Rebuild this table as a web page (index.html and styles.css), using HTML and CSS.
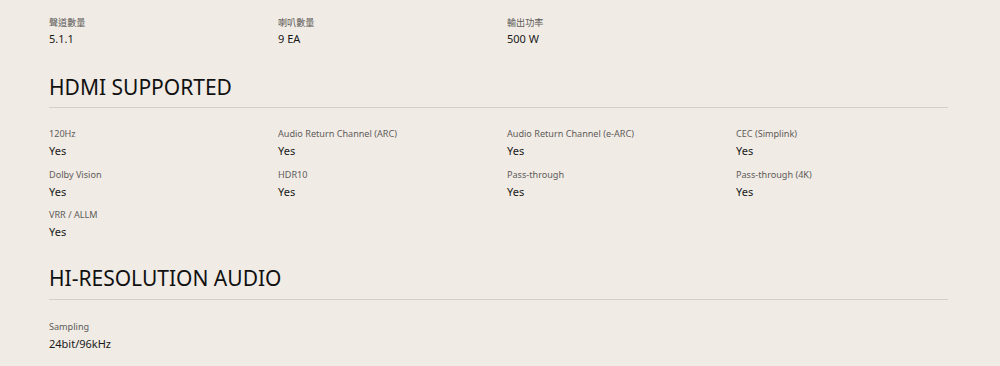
FILE: index.html
```html
<!DOCTYPE html>
<html lang="zh-Hant">
<head>
<meta charset="utf-8">
<link rel="stylesheet" href="styles.css">
</head>
<body>
<div class="page">
  <div class="grid top">
    <div class="item"><div class="label">聲道數量</div><div class="value">5.1.1</div></div>
    <div class="item"><div class="label">喇叭數量</div><div class="value">9 EA</div></div>
    <div class="item"><div class="label">輸出功率</div><div class="value">500 W</div></div>
  </div>

  <h2 class="heading">HDMI SUPPORTED</h2>
  <div class="grid">
    <div class="item"><div class="label">120Hz</div><div class="value">Yes</div></div>
    <div class="item"><div class="label">Audio Return Channel (ARC)</div><div class="value">Yes</div></div>
    <div class="item"><div class="label">Audio Return Channel (e-ARC)</div><div class="value">Yes</div></div>
    <div class="item"><div class="label">CEC (Simplink)</div><div class="value">Yes</div></div>
    <div class="item"><div class="label">Dolby Vision</div><div class="value">Yes</div></div>
    <div class="item"><div class="label">HDR10</div><div class="value">Yes</div></div>
    <div class="item"><div class="label">Pass-through</div><div class="value">Yes</div></div>
    <div class="item"><div class="label">Pass-through (4K)</div><div class="value">Yes</div></div>
    <div class="item"><div class="label">VRR / ALLM</div><div class="value">Yes</div></div>
  </div>

  <h2 class="heading heading-audio">HI-RESOLUTION AUDIO</h2>
  <div class="grid">
    <div class="item"><div class="label">Sampling</div><div class="value">24bit/96kHz</div></div>
  </div>
</div>
</body>
</html>
```

FILE: styles.css
```css
html, body {
  margin: 0;
  padding: 0;
  background: #f0ebe5;
}
body {
  font-family: "Noto Sans", "Noto Sans CJK TC", sans-serif;
  color: #1a1a1a;
}
.page {
  width: 899px;
  padding: 15px 0 0 49px;
}
.grid {
  display: grid;
  grid-template-columns: repeat(4, 213px);
  column-gap: 16px;
  row-gap: 8.5px;
}
.item {
  display: flex;
  flex-direction: column;
  gap: 2px;
}
.label {
  font-size: 9.1px;
  line-height: 14px;
  color: #5e5c5a;
}
.top .label {
  margin-top: 1px;
  margin-bottom: -1px;
}
.value {
  font-size: 11px;
  line-height: 16px;
  color: #1a1a1a;
}
.heading {
  margin: 23px 0 19px 0;
  padding-bottom: 5px;
  border-bottom: 1px solid #d3cfca;
  font-size: 21px;
  font-weight: 400;
  line-height: 30px;
  color: #111;
}
.top + .heading {
  margin-top: 25px;
}
.heading-audio {
  padding-bottom: 6px;
  margin-bottom: 20px;
}
```
